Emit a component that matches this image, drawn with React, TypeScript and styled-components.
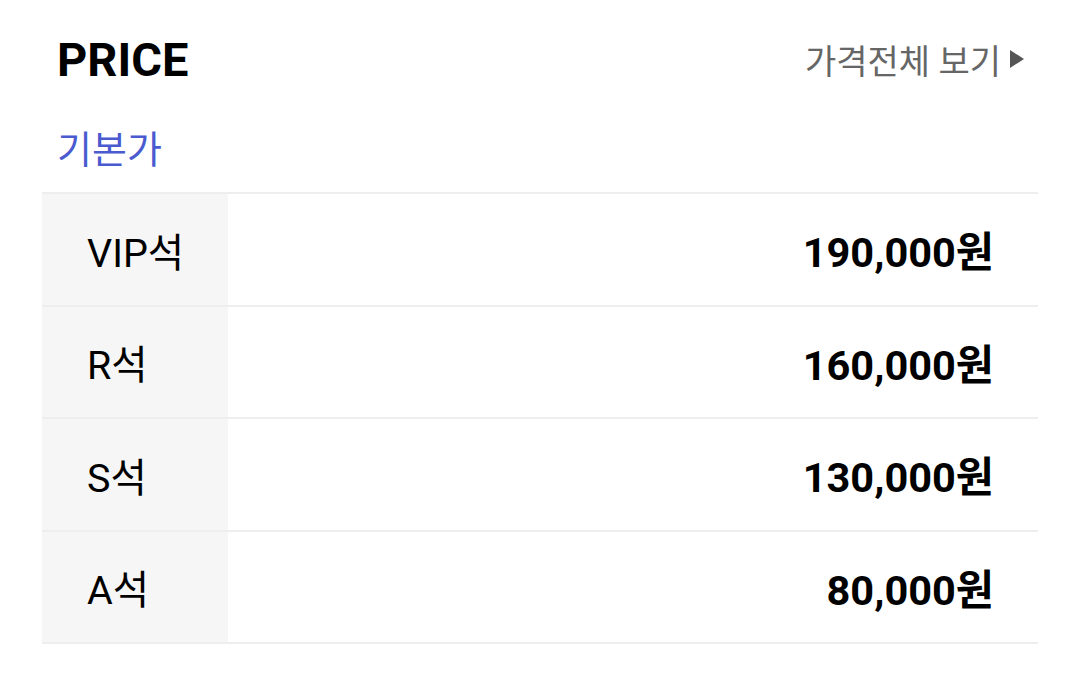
import React from "react";
import styled, { createGlobalStyle } from "styled-components";

const GlobalStyle = createGlobalStyle`
  html, body {
    margin: 0;
    padding: 0;
    background: #ffffff;
  }
  body {
    font-family: Roboto, "Noto Sans CJK KR", sans-serif;
    color: #000;
  }
`;

const Page = styled.div`
  width: 1080px;
  padding: 0 42px;
  box-sizing: border-box;
`;

const Header = styled.div`
  display: flex;
  align-items: center;
  justify-content: space-between;
  height: 118px;
  padding: 0 14px 0 15px;
`;

const Title = styled.h2`
  margin: 0;
  font-size: 47px;
  font-weight: 700;
`;

const MoreLink = styled.a`
  display: inline-flex;
  align-items: center;
  gap: 9px;
  font-size: 34px;
  color: #666666;
  text-decoration: none;
`;

const Arrow = styled.span`
  width: 0;
  height: 0;
  border-top: 9px solid transparent;
  border-bottom: 9px solid transparent;
  border-left: 14px solid #555555;
`;

const Category = styled.div`
  font-size: 38px;
  color: #4a5bd0;
  padding: 7px 0 17px 15px;
  line-height: 50px;
`;

const Table = styled.div`
  border-top: 2px solid #eeeeee;
`;

const Row = styled.div`
  display: grid;
  grid-template-columns: 186px 1fr;
  height: 110.5px;
  border-bottom: 2px solid #eeeeee;
`;

const Seat = styled.div`
  display: flex;
  align-items: center;
  background: #f6f6f6;
  padding-left: 45px;
  font-size: 39.5px;
`;

const Price = styled.div`
  display: flex;
  align-items: center;
  justify-content: flex-end;
  padding-right: 44px;
  font-size: 41.5px;
  font-weight: 700;
`;

const prices = [
  { seat: "VIP석", price: "190,000원" },
  { seat: "R석", price: "160,000원" },
  { seat: "S석", price: "130,000원" },
  { seat: "A석", price: "80,000원" },
];

export default function App() {
  return (
    <Page>
      <GlobalStyle />
      <Header>
        <Title>PRICE</Title>
        <MoreLink href="#">
          가격전체 보기
          <Arrow />
        </MoreLink>
      </Header>
      <Category>기본가</Category>
      <Table>
        {prices.map((p) => (
          <Row key={p.seat}>
            <Seat>{p.seat}</Seat>
            <Price>{p.price}</Price>
          </Row>
        ))}
      </Table>
    </Page>
  );
}
